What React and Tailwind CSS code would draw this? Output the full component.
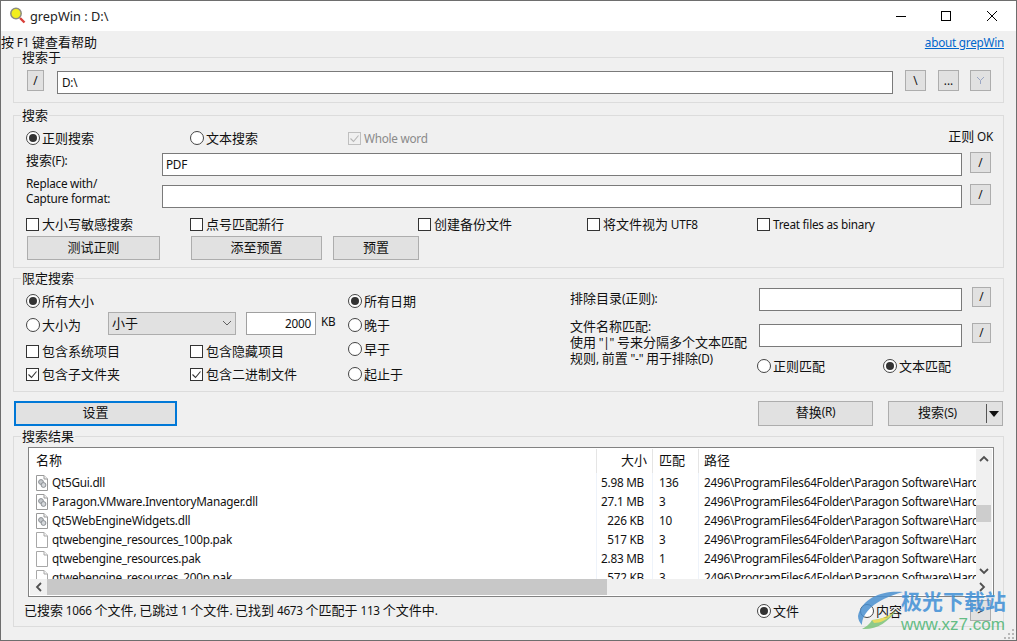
import React from "react";

const T = ({ children }) => (
  <>
    {String(children)
      .split(/([\x00-\x7f]+)/)
      .map((s, i) =>
        i % 2 ? (
          <span key={i} className="font-['Noto_Sans',sans-serif] text-[11.75px] tracking-[-0.25px]">{s}</span>
        ) : (
          s
        )
      )}
  </>
);

const Radio = ({ label, on, className = "" }) => (
  <div className={"flex h-[20px] items-center " + className}>
    <span className="flex h-[14px] w-[14px] shrink-0 items-center justify-center rounded-full border border-[#444444] bg-white">
      {on && <span className="h-[8px] w-[8px] rounded-full bg-[#333333]" />}
    </span>
    <span className="mb-[1px] ml-[2px] whitespace-nowrap"><T>{label}</T></span>
  </div>
);

const Check = ({ label, on, disabled, className = "" }) => (
  <div className={"flex h-[20px] items-center " + className}>
    <span className={"flex h-[13px] w-[13px] shrink-0 items-center justify-center border " + (disabled ? "border-[#bfbfbf] bg-[#f0f0f0]" : "border-[#333333] bg-white")}>
      {on && (
        <svg width="11" height="11" viewBox="0 0 11 11" fill="none">
          <path d="M1.5 5.5 L4.5 8.5 L9.5 2.5" stroke={disabled ? "#b5b5b5" : "#333333"} strokeWidth="1.1" />
        </svg>
      )}
    </span>
    <span className={"mb-[1px] ml-[3px] whitespace-nowrap " + (disabled ? "text-[#8a8a8a]" : "")}><T>{label}</T></span>
  </div>
);

const Btn = ({ children, className = "", border = "border border-[#adadad]" }) => (
  <div className={"flex shrink-0 items-center justify-center bg-[#e1e1e1] pb-[4px] " + border + " " + className}>{children}</div>
);

const Small = ({ children, className = "", size = "h-[21px] w-[21px]" }) => (
  <div className={"flex shrink-0 items-center justify-center border border-[#adadad] bg-[#e1e1e1] pb-[1px] font-['Noto_Sans',sans-serif] text-[11.75px] " + size + " " + className}>{children}</div>
);

const Field = ({ children, className = "", border = "border-[#7a7a7a]" }) => (
  <div className={"flex h-[23px] shrink-0 items-center border bg-white px-[4px] font-['Noto_Sans',sans-serif] text-[11.75px] tracking-[-0.25px] " + border + " " + className}>{children}</div>
);

const Group = ({ title, className = "", children }) => (
  <div className={"relative ml-[12px] w-[991px] shrink-0 border border-[#dcdcdc] " + className}>
    <div className="absolute left-[7px] top-[-9px] bg-[#f0f0f0] px-[1px] leading-[16px]">{title}</div>
    {children}
  </div>
);

const DllIcon = () => (
  <svg width="12" height="16" viewBox="0 0 12 16" className="shrink-0">
    <path d="M.5.5H8L11.5 4V15.5H.5Z" fill="#ffffff" stroke="#9a9a9a" />
    <path d="M8 .5V4H11.5" fill="#f0f0f0" stroke="#9a9a9a" />
    <circle cx="5" cy="7" r="2.4" fill="#c4c8cc" stroke="#8b8f94" />
    <circle cx="7.5" cy="10" r="2.4" fill="#d5d8db" stroke="#8b8f94" />
  </svg>
);

const FileIcon = () => (
  <svg width="12" height="16" viewBox="0 0 12 16" className="shrink-0">
    <path d="M.5.5H8L11.5 4V15.5H.5Z" fill="#ffffff" stroke="#a8a8a8" />
    <path d="M8 .5V4H11.5" fill="#f4f4f4" stroke="#a8a8a8" />
  </svg>
);

const path = "2496\\ProgramFiles64Folder\\Paragon Software\\Hard Disk Manager";
const rows = [
  ["Qt5Gui.dll", "5.98 MB", "136", true],
  ["Paragon.VMware.InventoryManager.dll", "27.1 MB", "3", true],
  ["Qt5WebEngineWidgets.dll", "226 KB", "10", true],
  ["qtwebengine_resources_100p.pak", "517 KB", "3", false],
  ["qtwebengine_resources.pak", "2.83 MB", "1", false],
  ["qtwebengine_resources_200p.pak", "572 KB", "3", false],
];

const Arrow = ({ d }) => (
  <svg width="10" height="10" viewBox="0 0 10 10" fill="none">
    <path d={d} stroke="#505050" strokeWidth="1.8" />
  </svg>
);

export default function App() {
  return (
    <div className="relative flex h-[641px] w-[1017px] flex-col overflow-hidden border border-[#6e6e6e] bg-[#f0f0f0] font-['Noto_Sans_CJK_SC','Noto_Sans',sans-serif] text-[13px] leading-[15px] text-[#111111]">
      <div className="flex h-[30px] shrink-0 items-center bg-white pl-[8px]">
        <svg width="18" height="18" viewBox="0 0 18 18" className="shrink-0">
          <path d="M11 11 L15.5 15.5" stroke="#d8403a" strokeWidth="2.4" />
          <circle cx="7" cy="6.5" r="5.2" fill="#f2ee1c" stroke="#8c8c80" strokeWidth="1.5" />
        </svg>
        <span className="ml-[3px] font-['Noto_Sans',sans-serif] text-[12.75px] text-[#222222]">grepWin : D:\</span>
        <div className="ml-auto flex items-center pr-[18px]">
          <svg width="12" height="12" viewBox="0 0 12 12"><path d="M1 6.5H11" stroke="#000" /></svg>
          <svg width="12" height="12" viewBox="0 0 12 12" className="ml-[33px]"><rect x="1.5" y="1.5" width="9" height="9" fill="none" stroke="#000" /></svg>
          <svg width="12" height="12" viewBox="0 0 12 12" className="ml-[34px]"><path d="M1 1L11 11M11 1L1 11" stroke="#000" /></svg>
        </div>
      </div>

      <div className="flex h-[22px] shrink-0 items-center justify-between pr-[12px]">
        <span><T>按 F1 键查看帮助</T></span>
        <span className="text-[#0066cc] underline"><T>about grepWin</T></span>
      </div>

      <Group title="搜索于" className="mt-[4px] h-[46px]">
        <div className="flex pl-[13px] pt-[12px]">
          <Small size="h-[21px] w-[17px]">/</Small>
          <Field className="ml-[13px] mt-[1px] w-[836px]">D:\</Field>
          <Small className="ml-[12px]">\</Small>
          <Small className="ml-[12px]">...</Small>
          <Small className="ml-[11px]">
            <svg width="9" height="8" viewBox="0 0 9 8" fill="none"><path d="M1 1L4.5 4.5L8 1M4.5 4.5V8" stroke="#9aa6c4" /></svg>
          </Small>
        </div>
      </Group>

      <Group title="搜索" className="mt-[12px] h-[153px]">
        <div className="pl-[12px] pt-[12px]">
          <div className="flex h-[20px] items-center">
            <Radio on label="正则搜索" className="w-[164px]" />
            <Radio label="文本搜索" className="w-[158px]" />
            <Check on disabled label="Whole word" />
            <span className="mb-[4px] ml-auto pr-[10px]"><T>正则 OK</T></span>
          </div>
          <div className="mt-[4px] flex h-[24px] items-start">
            <span className="w-[136px]"><T>搜索(F):</T></span>
            <Field className="mt-[1px] w-[800px] pl-[3px]">PDF</Field>
            <Small className="ml-[8px]">/</Small>
          </div>
          <div className="mt-[8px] flex h-[23px] items-start">
            <span className="mt-[-8px] w-[136px] font-['Noto_Sans',sans-serif] text-[11.75px] tracking-[-0.25px]">Replace with/<br />Capture format:</span>
            <Field className="mt-[1px] w-[800px]" />
            <Small className="ml-[8px]">/</Small>
          </div>
          <div className="mt-[7px] flex">
            <Check label="大小写敏感搜索" className="w-[164px]" />
            <Check label="点号匹配新行" className="w-[228px]" />
            <Check label="创建备份文件" className="w-[169px]" />
            <Check label="将文件视为 UTF8" className="w-[170px]" />
            <Check label="Treat files as binary" />
          </div>
          <div className="mt-[2px] flex pl-[1px]">
            <Btn className="h-[24px] w-[133px]">测试正则</Btn>
            <Btn className="ml-[31px] h-[24px] w-[131px]">添至预置</Btn>
            <Btn className="ml-[11px] h-[24px] w-[86px]">预置</Btn>
          </div>
        </div>
      </Group>

      <Group title="限定搜索" className="mt-[10px] flex h-[114px]">
        <div className="w-[334px] shrink-0 pl-[12px] pt-[12px]">
          <Radio on label="所有大小" />
          <div className="mt-[1px] flex h-[23px] items-center">
            <Radio label="大小为" className="mt-[3px] w-[82px]" />
            <div className="flex h-[23px] w-[128px] shrink-0 items-center justify-between border border-[#adadad] bg-[#e1e1e1] pb-[2px] pl-[3px] pr-[3px]">
              <span>小于</span>
              <svg width="10" height="6" viewBox="0 0 10 6" fill="none"><path d="M1 1L5 5L9 1" stroke="#606060" /></svg>
            </div>
            <Field border="border-[#a0a0a0]" className="ml-[10px] w-[70px] justify-end pr-[4px]">2000</Field>
            <span className="mb-[4px] ml-[5px] font-['Noto_Sans',sans-serif] text-[11.75px] tracking-[-0.25px]">KB</span>
          </div>
          <div className="mt-[6px] flex">
            <Check label="包含系统项目" className="w-[164px]" />
            <Check label="包含隐藏项目" />
          </div>
          <div className="mt-[3px] flex">
            <Check on label="包含子文件夹" className="w-[164px]" />
            <Check on label="包含二进制文件" />
          </div>
        </div>
        <div className="w-[222px] shrink-0 pt-[12px]">
          <Radio on label="所有日期" />
          <Radio label="晚于" className="mt-[4px]" />
          <Radio label="早于" className="mt-[4px]" />
          <Radio label="起止于" className="mt-[5px]" />
        </div>
        <div className="w-[187px] shrink-0 pt-[11px]">
          <div><T>排除目录(正则):</T></div>
          <div className="mt-[12px] whitespace-nowrap">
            <T>文件名称匹配:</T><br /><T>{'使用 "|" 号来分隔多个文本匹配'}</T><br /><T>{'规则, 前置 "-" 用于排除(D)'}</T>
          </div>
        </div>
        <div className="pt-[8px]">
          <div className="flex items-start pl-[2px]">
            <Field className="mt-[1px] w-[203px]" />
            <Small size="h-[20px] w-[19px]" className="ml-[10px]">/</Small>
          </div>
          <div className="mt-[12px] flex items-start pl-[2px]">
            <Field className="mt-[1px] w-[203px]" />
            <Small size="h-[20px] w-[19px]" className="ml-[10px]">/</Small>
          </div>
          <div className="mt-[9px] flex">
            <Radio label="正则匹配" className="w-[126px]" />
            <Radio on label="文本匹配" />
          </div>
        </div>
      </Group>

      <div className="ml-[13px] mt-[9px] flex h-[25px] shrink-0">
        <Btn border="border-2 border-[#0078d7]" className="h-[25px] w-[163px]">设置</Btn>
        <Btn className="ml-[581px] h-[25px] w-[115px]"><T>替换(R)</T></Btn>
        <div className="ml-[15px] flex h-[25px] w-[115px] items-center border border-[#adadad] bg-[#e1e1e1]">
          <span className="mb-[4px] flex-1 text-center"><T>搜索(S)</T></span>
          <span className="h-[19px] w-[1px] bg-[#555555]" />
          <svg width="15" height="8" viewBox="0 0 15 8" className="shrink-0"><path d="M2 1H12L7 7Z" fill="#111" /></svg>
        </div>
      </div>

      <Group title="搜索结果" className="mt-[10px] h-[191px]">
        <div className="ml-[14px] mt-[10px] flex h-[150px] w-[966px] flex-col border border-[#828282] bg-white">
          <div className="flex min-h-0 flex-1 overflow-hidden">
            <div className="w-[947px] shrink-0 overflow-hidden">
              <div className="flex h-[25px] items-center pt-[1px]">
                <div className="h-full w-[567px] pl-[7px] leading-[22px]">名称</div>
                <div className="h-full w-[56px] border-l border-[#e5e5e5] pr-[5px] text-right leading-[22px]">大小</div>
                <div className="h-full w-[46px] border-l border-[#e5e5e5] pl-[6px] leading-[22px]">匹配</div>
                <div className="h-full flex-1 border-l border-[#e5e5e5] pl-[5px] leading-[22px]">路径</div>
              </div>
              {rows.map((r) => (
                <div key={r[0]} className="flex h-[19px] items-center whitespace-nowrap font-['Noto_Sans',sans-serif] text-[11.75px] tracking-[-0.25px]">
                  <div className="flex w-[567px] items-center pl-[7px]">
                    {r[3] ? <DllIcon /> : <FileIcon />}
                    <span className="ml-[4px]">{r[0]}</span>
                  </div>
                  <div className="h-full w-[56px] border-l border-[#eef3fa] pr-[8px] text-right leading-[19px]">{r[1]}</div>
                  <div className="h-full w-[46px] border-l border-[#eef3fa] pl-[6px] leading-[19px]">{r[2]}</div>
                  <div className="h-full flex-1 overflow-hidden border-l border-[#eef3fa] pl-[5px] leading-[19px]">{path}</div>
                </div>
              ))}
            </div>
            <div className="relative mt-[1px] w-[16px] bg-[#f0f0f0]">
              <div className="flex justify-center pt-[5px]"><Arrow d="M1 7L5 3L9 7" /></div>
              <div className="absolute left-[0px] top-[56px] h-[17px] w-[15px] bg-[#cdcdcd]" />
              <div className="absolute bottom-[3px] left-[3px]"><Arrow d="M1 3L5 7L9 3" /></div>
            </div>
          </div>
          <div className="mx-[1px] mb-[1px] flex h-[16px] shrink-0 items-center bg-[#f0f0f0]">
            <div className="flex w-[17px] justify-center"><Arrow d="M7 1L3 5L7 9" /></div>
            <div className="h-full w-[560px] bg-[#c8c8c8]" />
            <div className="ml-auto mr-[5px]"><Arrow d="M3 1L7 5L3 9" /></div>
          </div>
        </div>
        <div className="mt-[3px] flex h-[21px] items-center pl-[10px]">
          <span className="mb-[1px] w-[733px] whitespace-nowrap"><T>已搜索 1066 个文件, 已跳过 1 个文件. 已找到 4673 个匹配于 113 个文件中.</T></span>
          <Radio on label="文件" className="w-[103px]" />
          <Radio label="内容" className="w-[110px]" />
          <Small>&gt;</Small>
        </div>
      </Group>

      <div className="absolute bottom-[0px] right-[1px]">
        <svg width="11" height="11" viewBox="0 0 11 11" fill="#b8b8b8">
          <rect x="8" y="0" width="2" height="2" /><rect x="4" y="4" width="2" height="2" /><rect x="8" y="4" width="2" height="2" />
          <rect x="0" y="8" width="2" height="2" /><rect x="4" y="8" width="2" height="2" /><rect x="8" y="8" width="2" height="2" />
        </svg>
      </div>

      <div className="pointer-events-none absolute left-[849px] top-[584px] h-[50px] w-[165px]">
        <svg width="60" height="50" viewBox="0 0 60 50" className="absolute left-0 top-0" opacity="0.85">
          <path d="M53 7C34 5 12 12 8 31C8 35 10 38 12 40C12 28 24 15 53 7Z" fill="#4a90d0" />
          <path d="M12 44C26 45 38 38 47 24C41 31 30 35 22 35C20 39 16 42 12 44Z" fill="#7cc47a" />
          <path d="M22 35C30 35 38 31 44 27C38 35 30 38 24 38Z" fill="#e6d94a" />
        </svg>
        <div className="absolute left-[51px] top-[3px] whitespace-nowrap text-[21px] font-bold leading-[24px] text-[#3f8fd6] opacity-85">极光下载站</div>
        <div className="absolute left-[51px] top-[31px] whitespace-nowrap font-['Liberation_Sans',sans-serif] text-[17px] leading-[18px] text-[#55b87a] opacity-90">www.xz7.com</div>
      </div>
    </div>
  );
}
